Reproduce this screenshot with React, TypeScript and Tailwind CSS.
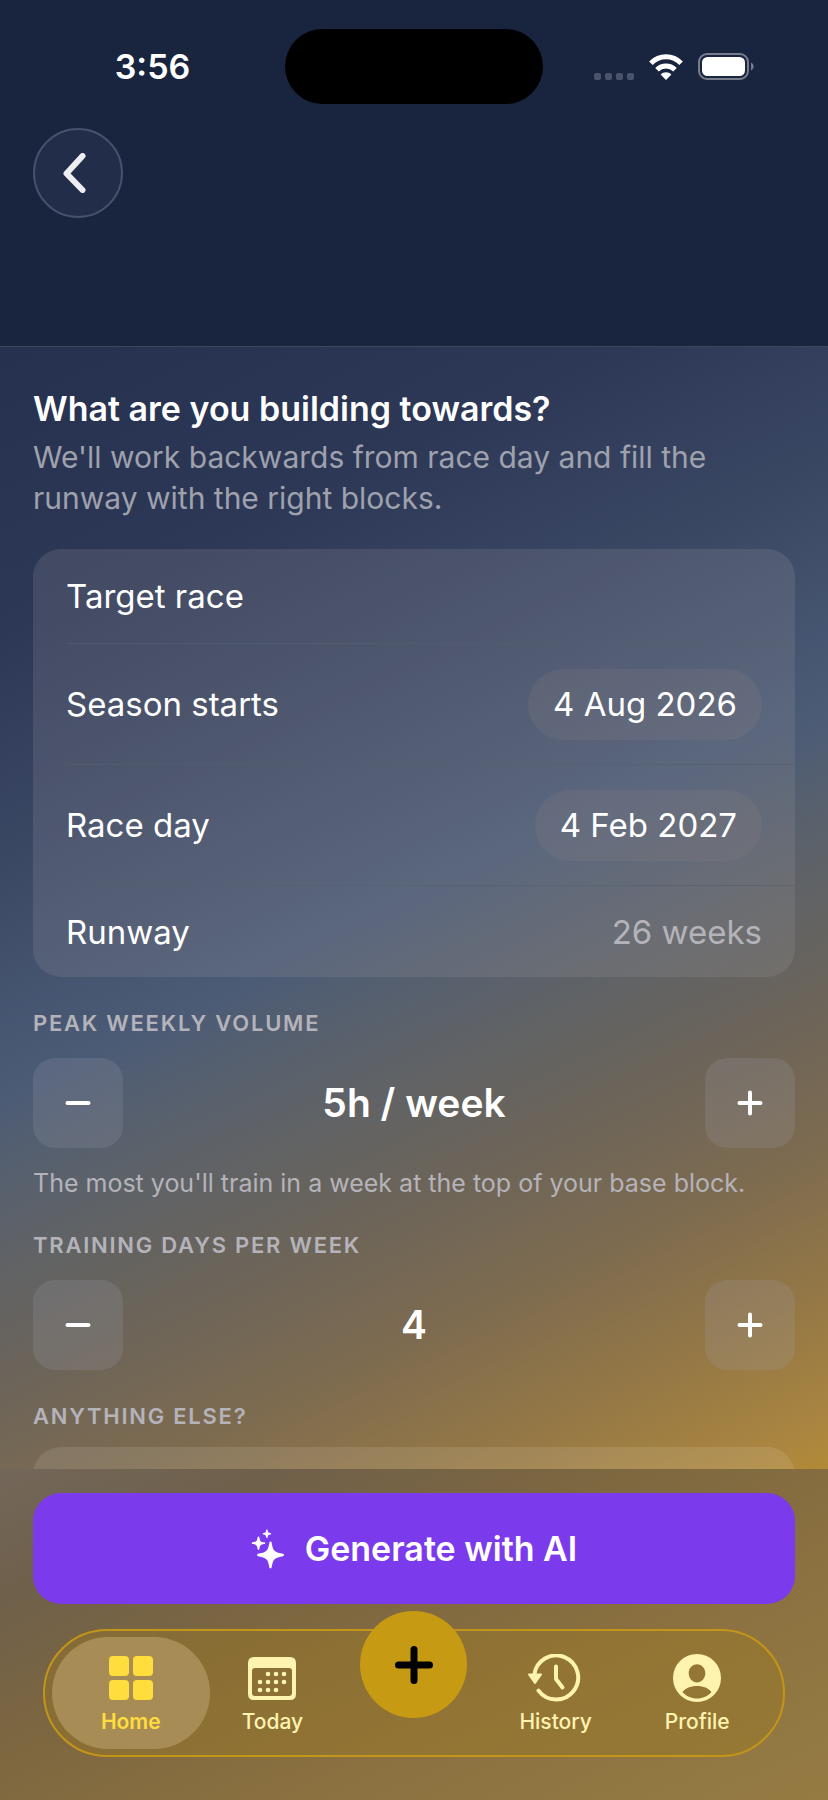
import React, { useState } from "react";
import clsx from "clsx";

function StatusBar() {
  return (
    <div className="grid h-[75px] grid-cols-[1fr_258px_1fr] items-center">
      <p className="pl-5 text-center text-[34px] leading-10 font-semibold">
        3:56
      </p>
      <div className="h-full rounded-full bg-black" />
      <div className="flex items-center justify-center gap-[15px] pr-6">
        <div className="flex gap-1 self-end">
          {[0, 1, 2, 3].map((dot) => (
            <span key={dot} className="size-[7px] rounded-xs bg-[#4a5369]" />
          ))}
        </div>
        <svg viewBox="0 0 34 26" className="h-[26px] w-[34px]" fill="none">
          <g stroke="#fff" strokeWidth="5">
            <path d="M1.9 9.2C10.4 .7 23.6 .7 32.1 9.2" />
            <path d="M8 15.7C13 10.700 21 10.700 26 15.700" />
          </g>
          <path
            d="M11.6 20.6C14.6 17.6 19.4 17.6 22.4 20.6L17 26Z"
            fill="#fff"
          />
        </svg>
        <svg viewBox="0 0 56 27" className="h-[27px] w-[56px]" fill="none">
          <rect
            x="1"
            y="1"
            width="49"
            height="25"
            rx="8"
            stroke="#777d8d"
            strokeWidth="2"
          />
          <rect x="4" y="4" width="43" height="19" rx="5.500" fill="#fff" />
          <path d="M53 9.500C56.500 11 56.500 16 53 17.500Z" fill="#777d8d" />
        </svg>
      </div>
    </div>
  );
}

function Row({ label, children, className, last }: any) {
  return (
    <div className={clsx("flex pl-[33px]", className)}>
      <div
        className={clsx(
          "flex flex-1 items-center justify-between gap-4 pr-[33px]",
          !last && "border-b border-[#54616b]/60",
        )}
      >
        {label}
        {children}
      </div>
    </div>
  );
}

function DateRow({ id, label, value }: any) {
  return (
    <Row
      className="h-[121px]"
      label={
        <span id={id} className="text-[33px] leading-10">
          {label}
        </span>
      }
    >
      <button
        aria-labelledby={`${id} ${id}-value`}
        className="h-[71px] rounded-full bg-[#8a8080]/20 px-[25px] text-[33px] leading-10"
      >
        <span id={`${id}-value`}>{value}</span>
      </button>
    </Row>
  );
}

function SectionLabel({ children }: any) {
  return (
    <span className="block text-[22px] leading-7 font-semibold tracking-[0.08em] text-[#b5b3ba] uppercase">
      {children}
    </span>
  );
}

function StepButton({ label, onClick, plus }: any) {
  return (
    <button
      aria-label={label}
      onClick={onClick}
      className="flex size-[90px] items-center justify-center rounded-[22px] bg-[#a0a0b0]/20"
    >
      <svg
        viewBox="0 0 26 26"
        className="size-[26px]"
        stroke="#fff"
        strokeWidth="4"
        strokeLinecap="round"
      >
        <path d="M2.500 13H23.500" />
        {plus && <path d="M13 2.500V23.500" />}
      </svg>
    </button>
  );
}

function Stepper({ title, value, suffix, onChange, hint }: any) {
  return (
    <section className="mt-8">
      <SectionLabel>{title}</SectionLabel>
      <div className="mt-[21px] flex items-center justify-between">
        <StepButton
          label={`Decrease ${title}`}
          onClick={() => onChange(Math.max(1, value - 1))}
        />
        <output className="text-[39px] leading-12 font-semibold">
          {value}
          {suffix}
        </output>
        <StepButton
          plus
          label={`Increase ${title}`}
          onClick={() => onChange(value + 1)}
        />
      </div>
      {hint && (
        <p className="mt-5 text-[25px] leading-[31px] text-[#b5b3ba]">{hint}</p>
      )}
    </section>
  );
}

function SparklesIcon() {
  return (
    <svg viewBox="0 0 34 40" className="h-10 w-[34px]" fill="#fff">
      <path d="M19.500 12.500C20.200 12.500 20.600 13 20.800 14.200C21.900 21.600 23.200 23 31 24.600C32.400 24.900 33 25.300 33 26C33 26.700 32.400 27.100 31 27.400C23.200 29 21.900 30.400 20.800 37.800C20.600 39 20.200 39.500 19.500 39.500C18.800 39.500 18.400 39 18.200 37.800C17.100 30.400 15.800 29 8 27.400C6.600 27.100 6 26.700 6 26C6 25.300 6.600 24.900 8 24.600C15.800 23 17.100 21.600 18.200 14.200C18.400 13 18.800 12.500 19.500 12.500Z" />
      <path d="M7.500 7.500C8.200 7.500 8.400 8.200 8.500 8.900C9 12.200 9.800 12.800 13 13.300C13.700 13.400 14.200 13.600 14.200 14.200C14.200 14.800 13.700 15 13 15.100C9.800 15.600 9 16.200 8.500 19.600C8.400 20.300 8.200 21 7.500 21C6.800 21 6.600 20.300 6.500 19.600C6 16.200 5.200 15.600 2 15.100C1.300 15 .8 14.800 .8 14.200C.8 13.600 1.300 13.400 2 13.300C5.200 12.800 6 12.200 6.500 8.900C6.600 8.200 6.800 7.500 7.500 7.500Z" />
      <path d="M15.900 .5C16.400 .5 16.600 1 16.700 1.500C17 3.500 17.300 3.800 19.200 4.100C19.800 4.200 20.200 4.400 20.200 4.800C20.200 5.200 19.800 5.400 19.200 5.500C17.300 5.800 17 6.100 16.700 8.100C16.600 8.600 16.400 9 15.900 9C15.400 9 15.200 8.600 15.100 8.100C14.800 6.100 14.500 5.800 12.600 5.500C12 5.400 11.600 5.200 11.600 4.800C11.600 4.400 12 4.200 12.600 4.100C14.500 3.800 14.800 3.500 15.100 1.500C15.200 1 15.400 .5 15.900 .5Z" />
    </svg>
  );
}

function HomeIcon() {
  return (
    <svg viewBox="0 0 44 48" className="h-12 w-11" fill="currentColor">
      <rect x="0" y="2" width="20" height="20" rx="4" />
      <rect x="24" y="2" width="20" height="20" rx="4" />
      <rect x="0" y="26" width="20" height="20" rx="4" />
      <rect x="24" y="26" width="20" height="20" rx="4" />
    </svg>
  );
}

function TodayIcon() {
  const dots = [
    [20, 20],
    [28, 20],
    [36, 20],
    [12, 28],
    [20, 28],
    [28, 28],
    [36, 28],
    [12, 36],
    [20, 36],
    [28, 36],
  ];
  return (
    <svg viewBox="0 0 48 48" className="size-12" fill="currentColor">
      <path
        fillRule="evenodd"
        d="M6 3H42Q48 3 48 9V40Q48 46 42 46H6Q0 46 0 40V9Q0 3 6 3ZM7 14Q4 14 4 17V39Q4 42 7 42H41Q44 42 44 39V17Q44 14 41 14Z"
      />
      {dots.map(([x, y]) => (
        <circle key={`${x}-${y}`} cx={x} cy={y} r="2.300" />
      ))}
    </svg>
  );
}

function HistoryIcon() {
  return (
    <svg
      viewBox="0 0 58 48"
      className="h-12 w-[58px]"
      fill="none"
      stroke="currentColor"
      strokeWidth="4"
      strokeLinecap="round"
      strokeLinejoin="round"
    >
      <path d="M7.300 21A22 22 0 1 1 11.500 36.600" />
      <path d="M29 12.500V25L35.500 33.500" />
      <path d="M2 20.500H14L8 29Z" fill="currentColor" strokeWidth="2" />
    </svg>
  );
}

function ProfileIcon() {
  return (
    <svg viewBox="0 0 48 48" className="size-12" fill="currentColor">
      <path
        fillRule="evenodd"
        d="M24 0A24 24 0 1 1 24 48A24 24 0 1 1 24 0ZM24 10.200C19.300 10.200 15.700 14.200 15.700 19.300C15.700 24.400 19.300 28.400 24 28.400C28.700 28.400 32.300 24.400 32.300 19.300C32.300 14.200 28.700 10.200 24 10.200ZM9.500 38C13 42.200 18.400 44.500 24 44.500C29.600 44.500 35 42.200 38.500 38C35.700 34.300 30.500 32 24 32C17.500 32 12.300 34.300 9.500 38Z"
      />
    </svg>
  );
}

function Tab({ label, icon, active }: any) {
  return (
    <a
      href="#"
      aria-current={active ? "page" : undefined}
      className={clsx(
        "-mx-2 flex flex-col items-center gap-[6px] rounded-full pt-[17px] text-[21px] leading-7",
        active
          ? "bg-[#a88c56] font-semibold text-[#ffdd3c]"
          : "font-medium text-[#fff3b0]",
      )}
    >
      {icon}
      {label}
    </a>
  );
}

export default function App() {
  const [volume, setVolume] = useState(5);
  const [days, setDays] = useState(4);

  return (
    <div className="flex h-screen flex-col bg-[linear-gradient(155deg,#1a2540_0%,#26304f_16%,#2d3856_29%,#3a4763_39%,#4b5b76_50%,#5c626a_56%,#6b645a_63%,#7d6b50_70%,#957845_77%,#ab8640_83%,#c4961a_90%)] font-['Inter','Liberation_Sans',sans-serif] text-white">
      <header className="h-[347px] shrink-0 border-b border-[#3d4762] bg-[#19243f] pt-[29px]">
        <StatusBar />
        <div className="mt-6 px-[33px]">
          <button
            aria-label="Back"
            className="flex size-[90px] items-center justify-center rounded-full border-2 border-[#46516b] bg-[#222d4a]"
          >
            <svg
              viewBox="0 0 30 40"
              className="h-10 w-[30px]"
              fill="none"
              stroke="#ededf2"
              strokeWidth="6"
              strokeLinecap="round"
              strokeLinejoin="round"
            >
              <path d="M19.500 3L3.500 20.500L19.500 37" />
            </svg>
          </button>
        </div>
      </header>

      <main className="min-h-0 flex-1 overflow-y-auto px-[33px] pt-[42px] [scrollbar-width:none]">
        <h1 className="text-[34px] leading-10 font-semibold">
          What are you building towards?
        </h1>
        <p className="mt-2 max-w-[700px] text-[30px] leading-[41px] text-[#9fa1ad]">
          We'll work backwards from race day and fill the runway with the right
          blocks.
        </p>

        <div className="mt-[30px] rounded-[28px] bg-[#a09ca0]/20">
          <Row
            className="h-[95px]"
            label={
              <label htmlFor="race" className="text-[33px] leading-10">
                Target race
              </label>
            }
          >
            <input
              id="race"
              type="text"
              className="min-w-0 flex-1 bg-transparent text-right text-[33px] leading-10 outline-none"
            />
          </Row>
          <DateRow id="season" label="Season starts" value="4 Aug 2026" />
          <DateRow id="race-day" label="Race day" value="4 Feb 2027" />
          <Row
            last
            className="h-[91px]"
            label={<span className="text-[33px] leading-10">Runway</span>}
          >
            <span className="text-[33px] leading-10 text-[#b5b3ba]">
              26 weeks
            </span>
          </Row>
        </div>

        <Stepper
          title="Peak weekly volume"
          value={volume}
          suffix="h / week"
          onChange={setVolume}
          hint="The most you'll train in a week at the top of your base block."
        />
        <Stepper
          title="Training days per week"
          value={days}
          onChange={setDays}
        />

        <div className="mt-8 pb-8">
          <label htmlFor="notes">
            <SectionLabel>Anything else?</SectionLabel>
          </label>
          <textarea
            id="notes"
            className="mt-[17px] block h-40 w-full resize-none rounded-[28px] bg-white/10 p-6 text-[30px] outline-none"
          />
        </div>
      </main>

      <footer className="shrink-0 bg-[linear-gradient(155deg,#73675a_0%,#6f604b_18%,#7d6740_40%,#8b7140_65%,#957b42_100%)] pt-6 pb-[43px]">
        <div className="px-[33px]">
          <button className="flex h-[111px] w-full items-center justify-center gap-5 rounded-[28px] bg-[#7c3aed] text-[34px] leading-10 font-semibold">
            <SparklesIcon />
            Generate with AI
          </button>
        </div>

        <nav className="mx-[43px] mt-[25px] grid h-[128px] grid-cols-5 rounded-full border-2 border-[#c39519] bg-[#a07c20]/35 px-[15px] py-[6px]">
          <Tab active label="Home" icon={<HomeIcon />} />
          <Tab label="Today" icon={<TodayIcon />} />
          <button
            aria-label="Add"
            className="-mt-[26px] flex size-[107px] items-center justify-center justify-self-center rounded-full bg-[#c69a13]"
          >
            <svg
              viewBox="0 0 38 38"
              className="size-[38px]"
              stroke="#000"
              strokeWidth="7"
              strokeLinecap="round"
            >
              <path d="M3.500 19H34.500M19 3.500V34.500" />
            </svg>
          </button>
          <Tab label="History" icon={<HistoryIcon />} />
          <Tab label="Profile" icon={<ProfileIcon />} />
        </nav>
      </footer>
    </div>
  );
}
